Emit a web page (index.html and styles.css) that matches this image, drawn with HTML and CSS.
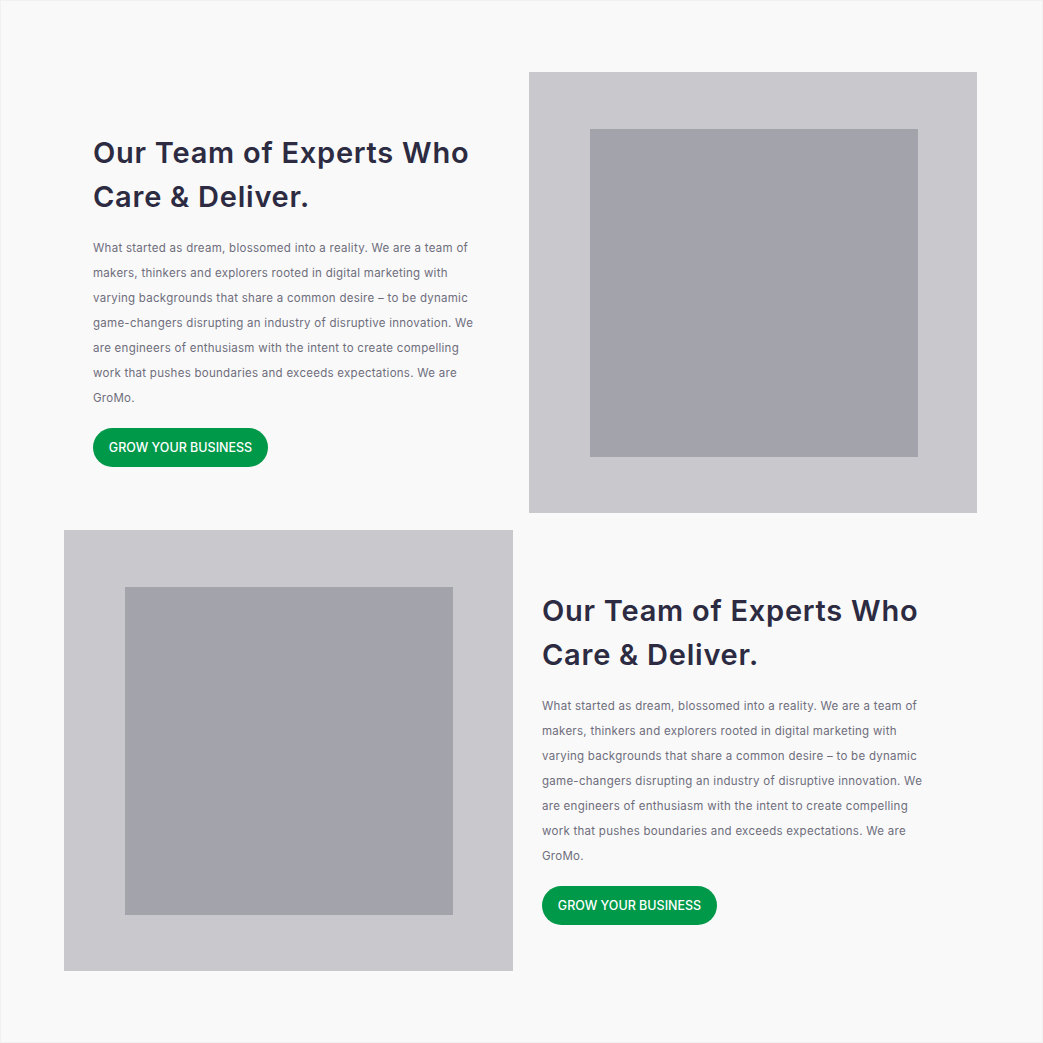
FILE: index.html
```html
<!DOCTYPE html>
<html lang="en">
<head>
<meta charset="utf-8">
<title>Our Team</title>
<link rel="stylesheet" href="styles.css">
</head>
<body>
<main class="page">
  <section class="row">
    <div class="text text-first">
      <h2 class="title">Our Team of Experts Who Care &amp; Deliver.</h2>
      <p class="copy">What started as dream, blossomed into a reality. We are a team of makers, thinkers and explorers rooted in digital marketing with varying backgrounds that share a common desire – to be dynamic game-changers disrupting an industry of disruptive innovation. We are engineers of enthusiasm with the intent to create compelling work that pushes boundaries and exceeds expectations. We are GroMo.</p>
      <a class="btn" href="#">GROW YOUR BUSINESS</a>
    </div>
    <div class="media"><div class="media-inner"></div></div>
  </section>
  <section class="row">
    <div class="media"><div class="media-inner"></div></div>
    <div class="text text-second">
      <h2 class="title">Our Team of Experts Who Care &amp; Deliver.</h2>
      <p class="copy">What started as dream, blossomed into a reality. We are a team of makers, thinkers and explorers rooted in digital marketing with varying backgrounds that share a common desire – to be dynamic game-changers disrupting an industry of disruptive innovation. We are engineers of enthusiasm with the intent to create compelling work that pushes boundaries and exceeds expectations. We are GroMo.</p>
      <a class="btn" href="#">GROW YOUR BUSINESS</a>
    </div>
  </section>
</main>
</body>
</html>
```
FILE: styles.css
```css
* { box-sizing: border-box; }
html, body { margin: 0; padding: 0; }
body {
  background: #f9f9f9;
  font-family: "Inter", "Noto Sans", sans-serif;
}
.page {
  width: 1043px;
  height: 1043px;
  border: 1px solid #f1f1f1;
  padding: 71px 65px 71px 63px;
  display: flex;
  flex-direction: column;
  gap: 17px;
}
.row {
  display: grid;
  grid-template-columns: 449px 448px;
  column-gap: 16px;
  height: 441px;
}
.media {
  background: #c9c8cd;
  display: flex;
  align-items: center;
  justify-content: center;
  padding-left: 1px;
}
.media-inner {
  width: 328px;
  height: 328px;
  background: #a3a3ab;
}
.text {
  display: flex;
  flex-direction: column;
  justify-content: center;
  align-items: flex-start;
  padding-top: 12px;
}
.text-first { padding-left: 29px; }
.text-second { padding-left: 13px; }
.title {
  margin: 0 0 17px;
  width: 410px;
  font-size: 29px;
  font-weight: 600;
  line-height: 44px;
  color: #2c2b42;
  letter-spacing: 0.75px;
}
.copy {
  margin: 0 0 17px;
  width: 392px;
  font-size: 11.5px;
  line-height: 25px;
  color: #6e6d7c;
  letter-spacing: 0.27px;
}
.btn {
  display: inline-flex;
  align-items: center;
  justify-content: center;
  width: 175px;
  height: 39px;
  border-radius: 20px;
  background: #00994a;
  color: #ffffff;
  font-size: 12.5px;
  font-weight: 500;
  text-decoration: none;
  letter-spacing: 0;
}
```
